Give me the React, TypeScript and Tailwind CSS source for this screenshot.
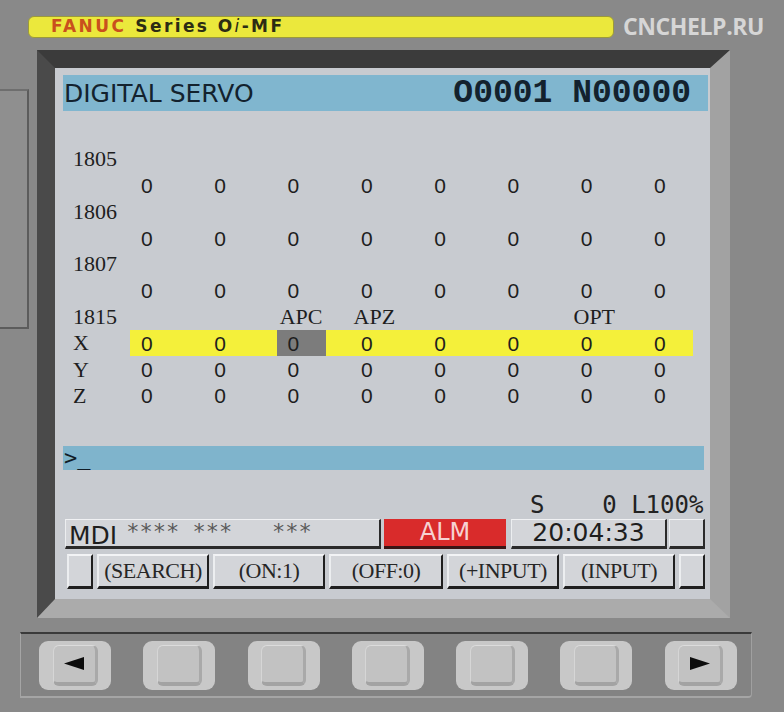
import React from 'react';

const cols = [0, 1, 2, 3, 4, 5, 6, 7];

const ParamRow: React.FC<{ label?: string; values?: boolean; highlight?: boolean; tags?: Record<number, string> }> = ({
  label,
  values,
  highlight,
  tags,
}) => {
  return (
    <div className="flex h-[26.3px] items-center">
      <div className="w-[57px] font-['Liberation_Serif',serif] text-[22px] leading-none text-[#1e1e1e]">{label}</div>
      <div className={`flex h-[26px] gap-[24.3px] ${highlight ? 'bg-[#f4f03a]' : ''} ${highlight ? 'pr-[1px]' : ''}`}>
        {cols.map((c) => (
          <div
            key={c}
            className={`flex h-full w-[49px] items-center ${tags ? 'justify-center' : 'pl-[11px]'} ${
              highlight && c === 2 ? 'bg-[#7c7c7c]' : ''
            }`}
          >
            {values && <span className="font-['Liberation_Sans',sans-serif] text-[21px] leading-none text-[#1e1e1e]">0</span>}
            {tags && tags[c] && (
              <span className="font-['Liberation_Serif',serif] text-[22px] leading-none text-[#1e1e1e]">{tags[c]}</span>
            )}
          </div>
        ))}
      </div>
    </div>
  );
};

const SoftKey: React.FC<{ label?: string; w: string }> = ({ label, w }) => (
  <div
    className={`${w} flex h-full items-center justify-center border-t-2 border-l-2 border-r-2 border-b-[3px] border-t-[#f2f3f5] border-l-[#eceef0] border-r-[#1f1f1f] border-b-[#1f1f1f] bg-[#d3d5d9] font-['Liberation_Serif',serif] text-[22px] leading-none tracking-[-0.5px] text-[#262626]`}
  >
    {label}
  </div>
);

const PanelKey: React.FC<{ arrow?: 'left' | 'right' }> = ({ arrow }) => (
  <div className="flex h-[49px] w-[72px] items-center justify-center rounded-[9px] bg-[#c8c8c8]">
    <div className="flex h-[41px] w-[45px] items-center justify-center rounded-[6px] border-t border-l border-r-[3px] border-b-[4px] border-t-[#dcdcdc] border-l-[#d6d6d6] border-r-[#a9a9a9] border-b-[#a3a3a3] bg-[#c2c2c2]">
      {arrow === 'left' && (
        <svg width="20" height="13" viewBox="0 0 20 13">
          <polygon points="0,6.5 20,0 20,13" fill="#0c0c0c" />
        </svg>
      )}
      {arrow === 'right' && (
        <svg width="20" height="13" viewBox="0 0 20 13">
          <polygon points="20,6.5 0,0 0,13" fill="#0c0c0c" />
        </svg>
      )}
    </div>
  </div>
);

export default function App() {
  return (
    <div className="flex h-[712px] w-[784px] flex-col overflow-hidden bg-[#898989]">
      {/* header strip */}
      <div className="flex items-center pt-[15px] pl-[28px]">
        <div className="flex h-[22px] w-[586px] items-center rounded-[6px] border border-[#9c9a3a] bg-[#ebe83c] pl-[22px] font-['DejaVu_Sans',sans-serif] text-[17px] font-bold leading-none tracking-[2.4px]">
          <span className="text-[#c9501d]">FANUC</span>
          <span className="ml-[9px] text-[#2c2c14]">
            Series O<span className="italic font-normal">i</span>-MF
          </span>
        </div>
        <div className="ml-[9px] font-['Open_Sans',sans-serif] text-[23px] font-bold leading-none tracking-[-0.4px] text-[#d6d6d6]">
          CNCHELP.RU
        </div>
      </div>

      {/* main area */}
      <div className="mt-[12px] flex">
        <div className="mt-[39px] h-[240px] w-[29px] border-t-2 border-r-2 border-b-2 border-t-[#6e6e6e] border-r-[#5c5c5c] border-b-[#5c5c5c] bg-[#8f8f8f]" />
        <div className="ml-[8px] h-[568px] w-[693px] border-t-[18px] border-l-[18px] border-r-[20px] border-b-[19px] border-t-[#3b3b3b] border-l-[#4a4a4a] border-r-[#a2a2a2] border-b-[#ababab]">
          <div className="flex h-full w-full flex-col bg-[#c8cbd0]">
            {/* title */}
            <div className="mt-[7px] ml-[8px] flex h-[36px] w-[645px] items-center justify-between bg-[#80b6cf] pr-[17px] pl-[1px] text-[#13222e]">
              <span className="font-['DejaVu_Sans',sans-serif] text-[25px] leading-none">DIGITAL SERVO</span>
              <span className="font-['Liberation_Mono',monospace] text-[33px] font-bold leading-none">O0001 N00000</span>
            </div>

            {/* parameters */}
            <div className="mt-[35px] ml-[18px] flex flex-col">
              <ParamRow label="1805" />
              <ParamRow values />
              <ParamRow label="1806" />
              <ParamRow values />
              <ParamRow label="1807" />
              <ParamRow values />
              <ParamRow label="1815" tags={{ 2: 'APC', 3: 'APZ', 6: 'OPT' }} />
              <ParamRow label="X" values highlight />
              <ParamRow label="Y" values />
              <ParamRow label="Z" values />
            </div>

            {/* key-in line */}
            <div className="mt-[37px] ml-[8px] flex h-[24px] w-[641px] items-center bg-[#7fb4cc] pl-[1px] font-['DejaVu_Sans_Mono',monospace] text-[22px] leading-none text-[#101c26]">
              &gt;_
            </div>

            {/* spindle / load */}
            <div className="mt-[23px] flex h-[24px] items-center pl-[475px] font-['DejaVu_Sans_Mono',monospace] text-[24px] leading-none whitespace-pre text-[#222]">
              {'S    0 L100%'}
            </div>

            {/* status */}
            <div className="mt-[2px] ml-[10px] flex h-[30px] items-stretch">
              <div className="flex w-[316px] items-start border-t border-l border-r-2 border-b-[3px] border-t-[#f0f1f3] border-l-[#eceef0] border-r-[#2a2a2a] border-b-[#2a2a2a] bg-[#d3d5d9] pl-[3px]">
                <span className="mt-[3px] font-['DejaVu_Sans',sans-serif] text-[25px] leading-none text-[#1e1e1e]">MDI</span>
                <span className="ml-[9px] mt-[1px] font-['DejaVu_Sans_Mono',monospace] text-[22px] leading-none whitespace-pre text-[#5a5a5a]">
                  {'**** ***   ***'}
                </span>
              </div>
              <div className="ml-[3px] flex w-[122px] items-center justify-center border-b-[3px] border-b-[#3a1515] bg-[#d92b2b] font-['DejaVu_Sans',sans-serif] text-[24px] leading-none text-[#f6d2d2]">
                ALM
              </div>
              <div className="ml-[5px] flex w-[156px] items-center justify-center border-t border-l border-r-2 border-b-[3px] border-t-[#f0f1f3] border-l-[#eceef0] border-r-[#2a2a2a] border-b-[#2a2a2a] bg-[#d3d5d9] font-['DejaVu_Sans',sans-serif] text-[25px] leading-none text-[#1e1e1e]">
                20:04:33
              </div>
              <div className="ml-[2px] w-[36px] border-t border-l border-r-2 border-b-[3px] border-t-[#f0f1f3] border-l-[#eceef0] border-r-[#2a2a2a] border-b-[#2a2a2a] bg-[#d3d5d9]" />
            </div>

            {/* soft keys */}
            <div className="mt-[5px] ml-[12px] flex h-[35px] gap-[4px]">
              <SoftKey w="w-[26px]" />
              <SoftKey w="w-[112px]" label="(SEARCH)" />
              <SoftKey w="w-[112px]" label="(ON:1)" />
              <SoftKey w="w-[114px]" label="(OFF:0)" />
              <SoftKey w="w-[112px]" label="(+INPUT)" />
              <SoftKey w="w-[112px]" label="(INPUT)" />
              <SoftKey w="w-[26px]" />
            </div>
          </div>
        </div>
      </div>

      {/* hardware soft-key panel */}
      <div className="mt-[14px] ml-[20px] flex h-[66px] w-[732px] items-center gap-[32.3px] rounded-br-[4px] border-t-2 border-l border-r border-b-2 border-t-[#3a3a3a] border-l-[#a5a5a5] border-r-[#a0a0a0] border-b-[#a5a5a5] bg-[#838383] pl-[18px]">
        <PanelKey arrow="left" />
        <PanelKey />
        <PanelKey />
        <PanelKey />
        <PanelKey />
        <PanelKey />
        <PanelKey arrow="right" />
      </div>
    </div>
  );
}
